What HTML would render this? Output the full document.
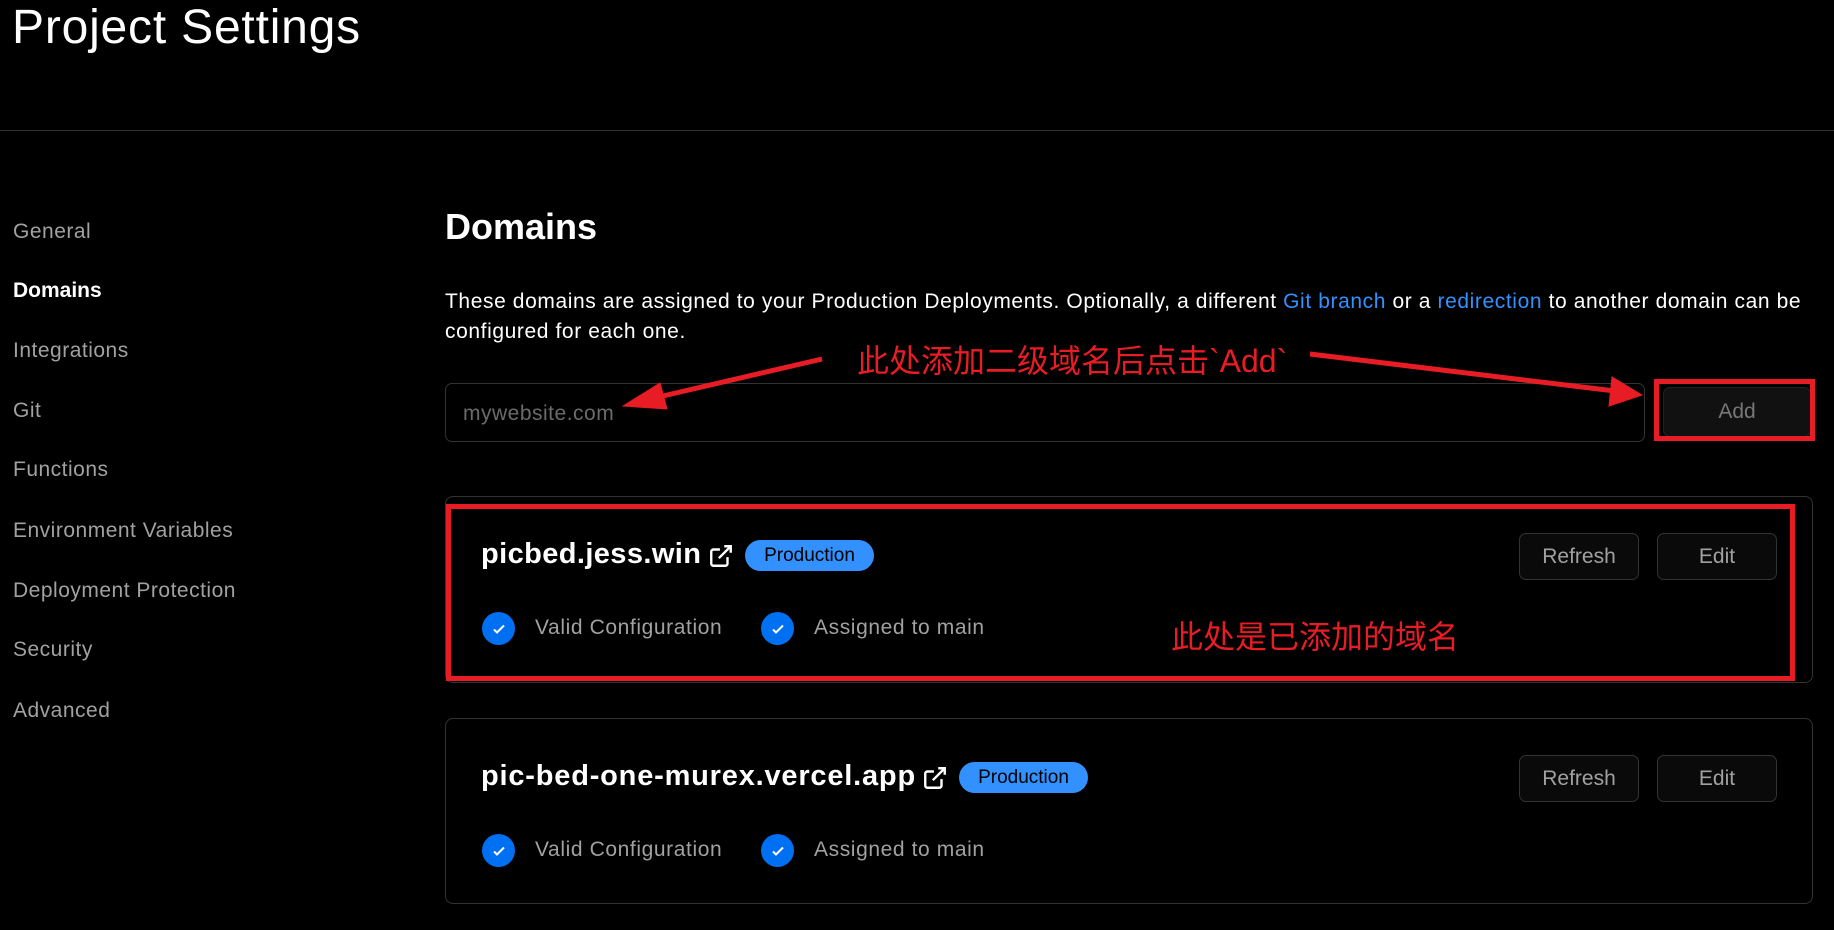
<!DOCTYPE html>
<html><head><meta charset="utf-8"><style>
*{margin:0;padding:0;box-sizing:border-box}
body{width:1834px;height:930px;background:#000;color:#ededed;font-family:"Liberation Sans","Noto Sans CJK SC",sans-serif;position:relative;overflow:hidden}
.a{position:absolute;white-space:nowrap}
.nav{font-size:21px;color:#a1a1a1;left:13px;letter-spacing:0.5px}
.btn{position:absolute;border:1px solid #333;border-radius:7px;color:#a1a1a1;font-size:21px;display:flex;align-items:center;justify-content:center;background:#0a0a0a}
.card{position:absolute;left:445px;width:1368px;border:1px solid #333;border-radius:8px}
.badge{position:absolute;color:#000;font-size:19px;border-radius:16px;display:flex;align-items:center;justify-content:center;background:#3291ff}
.chk{position:absolute;width:33px;height:33px;border-radius:50%;background:#0070f3;display:flex;align-items:center;justify-content:center}
.lbl{position:absolute;font-size:21px;color:#a1a1a1;white-space:nowrap;letter-spacing:0.6px}
.red{position:absolute;border:5px solid #e81c24}
.dn{font-size:29px;font-weight:bold;color:#fff;letter-spacing:0.4px}
</style></head><body>
<div class="a" style="left:12px;top:0px;font-size:48px;color:#fff;letter-spacing:0.8px">Project Settings</div>
<div class="a" style="left:0;top:130px;width:1834px;height:1px;background:#333"></div>
<div class="a nav" style="top:220px">General</div>
<div class="a nav" style="top:279px;color:#fff;font-weight:bold;letter-spacing:0">Domains</div>
<div class="a nav" style="top:339px">Integrations</div>
<div class="a nav" style="top:399px">Git</div>
<div class="a nav" style="top:458px">Functions</div>
<div class="a nav" style="top:519px">Environment Variables</div>
<div class="a nav" style="top:579px">Deployment Protection</div>
<div class="a nav" style="top:638px">Security</div>
<div class="a nav" style="top:699px">Advanced</div>

<div class="a" style="left:445px;top:206px;font-size:36px;font-weight:bold;color:#fff">Domains</div>
<div class="a" style="left:445px;top:287px;font-size:21px;line-height:30px;color:#fff;white-space:normal;width:1380px;letter-spacing:0.6px">These domains are assigned to your Production Deployments. Optionally, a different <span style="color:#3291ff">Git branch</span> or a <span style="color:#3291ff">redirection</span> to another domain can be configured for each one.</div>

<div class="a" style="left:445px;top:383px;width:1200px;height:59px;border:1px solid #333;border-radius:7px"></div>
<div class="a" style="left:463px;top:402px;font-size:21px;color:#6b6b6b;letter-spacing:0.5px">mywebsite.com</div>
<div class="btn" style="left:1663px;top:387px;width:148px;height:50px;background:#111;color:#777;border-color:#222">Add</div>
<div class="red" style="left:1654px;top:379px;width:161px;height:62px"></div>
<div class="a" style="left:857px;top:336px;font-size:32px;color:#e81c24">此处添加二级域名后点击`Add`</div>

<svg class="a" style="left:0;top:0" width="1834" height="930">
<g fill="#e81c24" stroke="#e81c24">
<line x1="822" y1="359" x2="650" y2="399" stroke-width="5"/>
<polygon points="623,406 660,383 667,409" />
<line x1="1310" y1="354" x2="1615" y2="391" stroke-width="5"/>
<polygon points="1642,395 1612,377 1609,406"/>
</g></svg>

<div class="card" style="top:496px;height:187px"></div>
<div class="a dn" style="left:481px;top:538px">picbed.jess.win</div>
<svg class="a" style="left:708px;top:543px" width="26" height="26" viewBox="0 0 24 24" fill="none" stroke="#fff" stroke-width="2.2"><path d="M18 13v6a2 2 0 0 1-2 2H5a2 2 0 0 1-2-2V8a2 2 0 0 1 2-2h6M15 3h6v6M10 14L21 3"/></svg>
<div class="badge" style="left:745px;top:540px;width:129px;height:31px">Production</div>
<div class="btn" style="left:1519px;top:533px;width:120px;height:47px">Refresh</div>
<div class="btn" style="left:1657px;top:533px;width:120px;height:47px">Edit</div>
<div class="chk" style="left:482px;top:612px"><svg width="16" height="16" viewBox="0 0 16 16" fill="none" stroke="#fff" stroke-width="2"><path d="M3 8.5l3 3 7-7"/></svg></div>
<div class="lbl" style="left:535px;top:616px">Valid Configuration</div>
<div class="chk" style="left:761px;top:612px"><svg width="16" height="16" viewBox="0 0 16 16" fill="none" stroke="#fff" stroke-width="2"><path d="M3 8.5l3 3 7-7"/></svg></div>
<div class="lbl" style="left:814px;top:616px">Assigned to main</div>
<div class="red" style="left:446px;top:504px;width:1349px;height:177px"></div>
<div class="a" style="left:1171px;top:612px;font-size:32px;color:#e81c24">此处是已添加的域名</div>

<div class="card" style="top:718px;height:186px"></div>
<div class="a dn" style="left:481px;top:760px;letter-spacing:0.8px">pic-bed-one-murex.vercel.app</div>
<svg class="a" style="left:922px;top:765px" width="26" height="26" viewBox="0 0 24 24" fill="none" stroke="#fff" stroke-width="2.2"><path d="M18 13v6a2 2 0 0 1-2 2H5a2 2 0 0 1-2-2V8a2 2 0 0 1 2-2h6M15 3h6v6M10 14L21 3"/></svg>
<div class="badge" style="left:959px;top:762px;width:129px;height:31px">Production</div>
<div class="btn" style="left:1519px;top:755px;width:120px;height:47px">Refresh</div>
<div class="btn" style="left:1657px;top:755px;width:120px;height:47px">Edit</div>
<div class="chk" style="left:482px;top:834px"><svg width="16" height="16" viewBox="0 0 16 16" fill="none" stroke="#fff" stroke-width="2"><path d="M3 8.5l3 3 7-7"/></svg></div>
<div class="lbl" style="left:535px;top:838px">Valid Configuration</div>
<div class="chk" style="left:761px;top:834px"><svg width="16" height="16" viewBox="0 0 16 16" fill="none" stroke="#fff" stroke-width="2"><path d="M3 8.5l3 3 7-7"/></svg></div>
<div class="lbl" style="left:814px;top:838px">Assigned to main</div>
</body></html>
